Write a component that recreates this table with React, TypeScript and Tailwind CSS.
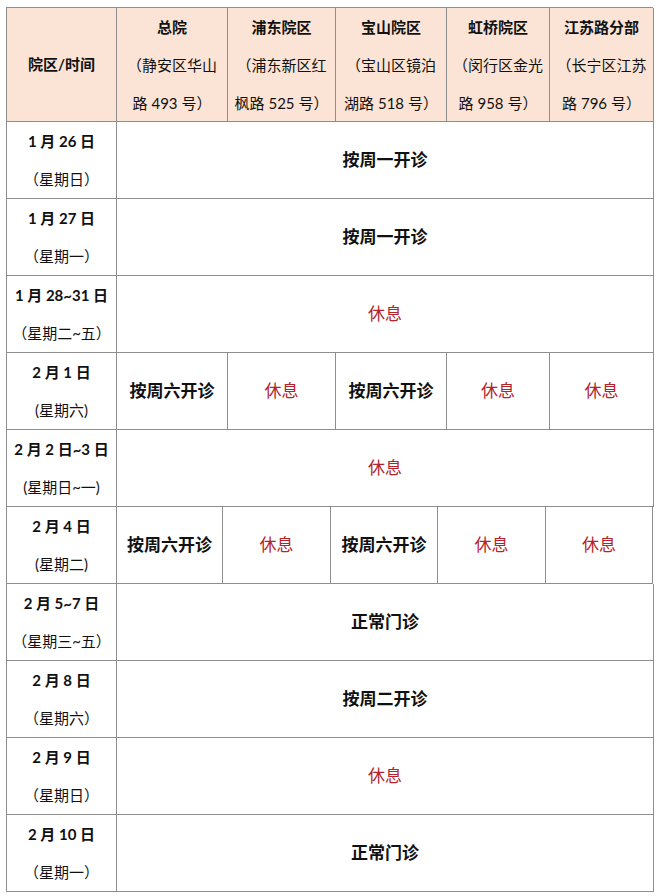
const font = {
  fontFamily: 'Lato, "Noto Sans CJK SC", sans-serif',
};

type Row = {
  date: string;
  week: string;
  cells: { text: string; rest?: boolean }[] | { text: string; rest?: boolean };
  shifted?: boolean;
};

const campuses = [
  { name: "总院", lines: ["（静安区华山", "路 493 号）"] },
  { name: "浦东院区", lines: ["（浦东新区红", "枫路 525 号）"] },
  { name: "宝山院区", lines: ["（宝山区镜泊", "湖路 518 号）"] },
  { name: "虹桥院区", lines: ["（闵行区金光", "路 958 号）"] },
  { name: "江苏路分部", lines: ["（长宁区江苏", "路 796 号）"] },
];

const rows: Row[] = [
  { date: "1 月 26 日", week: "（星期日）", cells: { text: "按周一开诊" } },
  { date: "1 月 27 日", week: "（星期一）", cells: { text: "按周一开诊" } },
  { date: "1 月 28~31 日", week: "（星期二~五）", cells: { text: "休息", rest: true } },
  {
    date: "2 月 1 日",
    week: "(星期六)",
    cells: [
      { text: "按周六开诊" },
      { text: "休息", rest: true },
      { text: "按周六开诊" },
      { text: "休息", rest: true },
      { text: "休息", rest: true },
    ],
  },
  { date: "2 月 2 日~3 日", week: "(星期日~一)", cells: { text: "休息", rest: true } },
  {
    date: "2 月 4 日",
    week: "(星期二)",
    shifted: true,
    cells: [
      { text: "按周六开诊" },
      { text: "休息", rest: true },
      { text: "按周六开诊" },
      { text: "休息", rest: true },
      { text: "休息", rest: true },
    ],
  },
  { date: "2 月 5~7 日", week: "（星期三~五）", cells: { text: "正常门诊" } },
  { date: "2 月 8 日", week: "（星期六）", cells: { text: "按周二开诊" } },
  { date: "2 月 9 日", week: "（星期日）", cells: { text: "休息", rest: true } },
  { date: "2 月 10 日", week: "（星期一）", cells: { text: "正常门诊" } },
];

function Value({ text, rest }: { text: string; rest?: boolean }) {
  return (
    <span
      className={
        rest
          ? "text-[17px] text-[#b3232b]"
          : "text-[17px] font-bold text-[#111]"
      }
    >
      {text}
    </span>
  );
}

export default function App() {
  return (
    <div className="min-h-[896px] w-[660px] bg-white pl-[6px] pt-[7px]" style={font}>
      <div className="grid w-[647px] grid-cols-[110px_111px_108px_111px_103px_104px] border-l border-t border-[#8e8e8e] text-[#111]">
        {/* Header */}
        <div className="flex h-[114px] items-center justify-center border-b border-r border-[#8e8e8e] bg-[#fbe4d5] text-[15px] font-bold">
          院区/时间
        </div>
        {campuses.map((c) => (
          <div
            key={c.name}
            className="flex h-[114px] flex-col items-center justify-center border-b border-r border-[#8e8e8e] bg-[#fbe4d5] text-center text-[15px] leading-[38px]"
          >
            <span className="font-bold">{c.name}</span>
            {c.lines.map((l) => (
              <span key={l} className="whitespace-nowrap">
                {l}
              </span>
            ))}
          </div>
        ))}

        {/* Body */}
        {rows.map((r) => (
          <div key={r.date} className="contents">
            <div className="flex h-[77px] flex-col items-center justify-center border-b border-r border-[#8e8e8e] text-[15px] leading-[38px]">
              <span className="whitespace-nowrap font-bold">{r.date}</span>
              <span className="whitespace-nowrap">{r.week}</span>
            </div>
            {Array.isArray(r.cells) ? (
              <div
                className={
                  r.shifted
                    ? "col-span-5 grid grid-cols-[106px_108px_107px_108px_107px]"
                    : "col-span-5 grid grid-cols-[111px_108px_111px_103px_104px]"
                }
              >
                {r.cells.map((c, i) => (
                  <div
                    key={i}
                    className="flex h-[77px] items-center justify-center border-b border-r border-[#8e8e8e]"
                  >
                    <Value text={c.text} rest={c.rest} />
                  </div>
                ))}
              </div>
            ) : (
              <div className="col-span-5 flex h-[77px] items-center justify-center border-b border-r border-[#8e8e8e]">
                <Value text={r.cells.text} rest={r.cells.rest} />
              </div>
            )}
          </div>
        ))}
      </div>
    </div>
  );
}
